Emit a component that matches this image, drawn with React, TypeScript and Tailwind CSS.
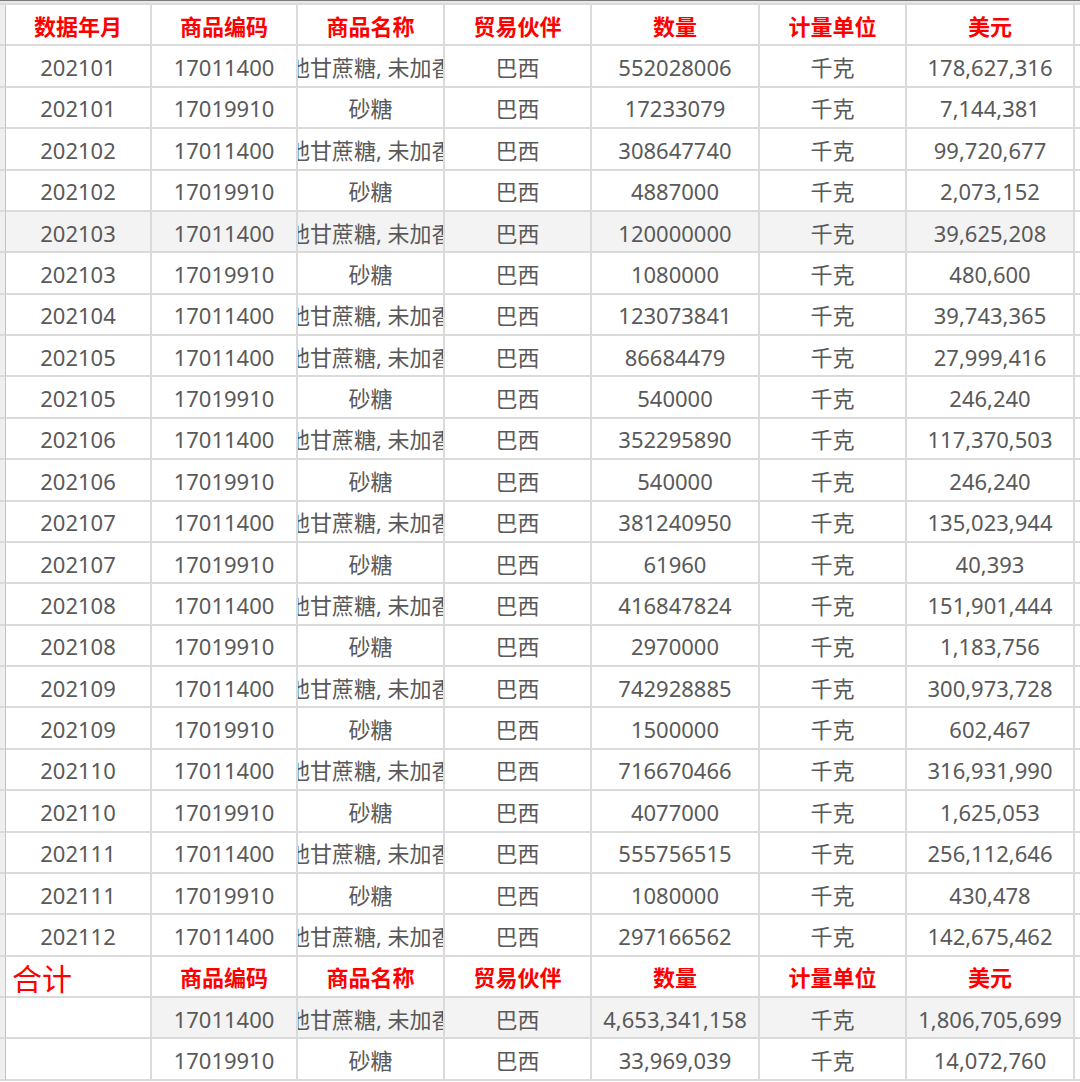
import React from 'react';

// 单元格里放不下的名称，只保留可见的那一段
const LONG = '他甘蔗糖, 未加香';

type Row = [string, string, string, string, string];

// 月份, 编码, 名称, 数量, 美元
const rows: Row[] = [
  ['202101', '17011400', LONG, '552028006', '178,627,316'],
  ['202101', '17019910', '砂糖', '17233079', '7,144,381'],
  ['202102', '17011400', LONG, '308647740', '99,720,677'],
  ['202102', '17019910', '砂糖', '4887000', '2,073,152'],
  ['202103', '17011400', LONG, '120000000', '39,625,208'],
  ['202103', '17019910', '砂糖', '1080000', '480,600'],
  ['202104', '17011400', LONG, '123073841', '39,743,365'],
  ['202105', '17011400', LONG, '86684479', '27,999,416'],
  ['202105', '17019910', '砂糖', '540000', '246,240'],
  ['202106', '17011400', LONG, '352295890', '117,370,503'],
  ['202106', '17019910', '砂糖', '540000', '246,240'],
  ['202107', '17011400', LONG, '381240950', '135,023,944'],
  ['202107', '17019910', '砂糖', '61960', '40,393'],
  ['202108', '17011400', LONG, '416847824', '151,901,444'],
  ['202108', '17019910', '砂糖', '2970000', '1,183,756'],
  ['202109', '17011400', LONG, '742928885', '300,973,728'],
  ['202109', '17019910', '砂糖', '1500000', '602,467'],
  ['202110', '17011400', LONG, '716670466', '316,931,990'],
  ['202110', '17019910', '砂糖', '4077000', '1,625,053'],
  ['202111', '17011400', LONG, '555756515', '256,112,646'],
  ['202111', '17019910', '砂糖', '1080000', '430,478'],
  ['202112', '17011400', LONG, '297166562', '142,675,462'],
];

const totals: Row[] = [
  ['', '17011400', LONG, '4,653,341,158', '1,806,705,699'],
  ['', '17019910', '砂糖', '33,969,039', '14,072,760'],
];

const cols = 'grid grid-cols-[6px_146px_146px_147px_147px_168px_147px_168px_5px]';
const cell =
  'flex items-center justify-center overflow-hidden whitespace-nowrap pt-[2px] border-r-2 border-b-2 border-[#dadada]';

const Stub = () => <div className="border-r border-b-2 border-[#c4c4c4] border-b-[#dadada] bg-[#efefef]" />;

const Header = ({ first }: { first?: boolean }) => {
  const titles = ['商品编码', '商品名称', '贸易伙伴', '数量', '计量单位', '美元'];
  return (
    <div className={`${cols} h-[41.38px]`}>
      <Stub />
      {first ? (
        <div className={`${cell} font-bold text-[#ff0000]`}>数据年月</div>
      ) : (
        <div className={`${cell} !justify-start pl-[6px] pt-[5px] text-[30px] text-[#ff0000]`}>合计</div>
      )}
      {titles.map((t) => (
        <div key={t} className={`${cell} font-bold text-[#ff0000]`}>
          {t}
        </div>
      ))}
      <div className="border-b-2 border-[#dadada]" />
    </div>
  );
};

const DataRow = ({ row, shade, shadeFrom }: { row: Row; shade?: boolean; shadeFrom?: number }) => {
  const [month, code, name, qty, usd] = row;
  const values = [month, code, name, '巴西', qty, '千克', usd];
  return (
    <div className={`${cols} h-[41.38px]`}>
      <Stub />
      {values.map((v, i) => {
        const bg = shade && i >= (shadeFrom ?? 0) ? 'bg-[#f3f3f3]' : 'bg-white';
        if (v === LONG) {
          return (
            <div key={i} className={`${cell} ${bg} !justify-start`}>
              <span className="-ml-[10px]">{v}</span>
            </div>
          );
        }
        return (
          <div key={i} className={`${cell} ${bg}`}>
            {v}
          </div>
        );
      })}
      <div className="border-b-2 border-[#dadada]" />
    </div>
  );
};

export default function App() {
  return (
    <div
      className="w-[1080px] h-[1082px] overflow-hidden bg-white text-[22px] leading-none text-[#595959]"
      style={{ fontFamily: '"Noto Sans", "Noto Sans CJK SC", sans-serif' }}
    >
      <div className="h-[5px] border-t border-[#7a7a7a] bg-[#e8e8e8] border-b-2 border-b-[#dadada]" />
      <Header first />
      {rows.map((r, i) => (
        <DataRow key={i} row={r} shade={i === 4} />
      ))}
      <Header />
      {totals.map((r, i) => (
        <DataRow key={i} row={r} shade={i === 0} shadeFrom={1} />
      ))}
    </div>
  );
}
